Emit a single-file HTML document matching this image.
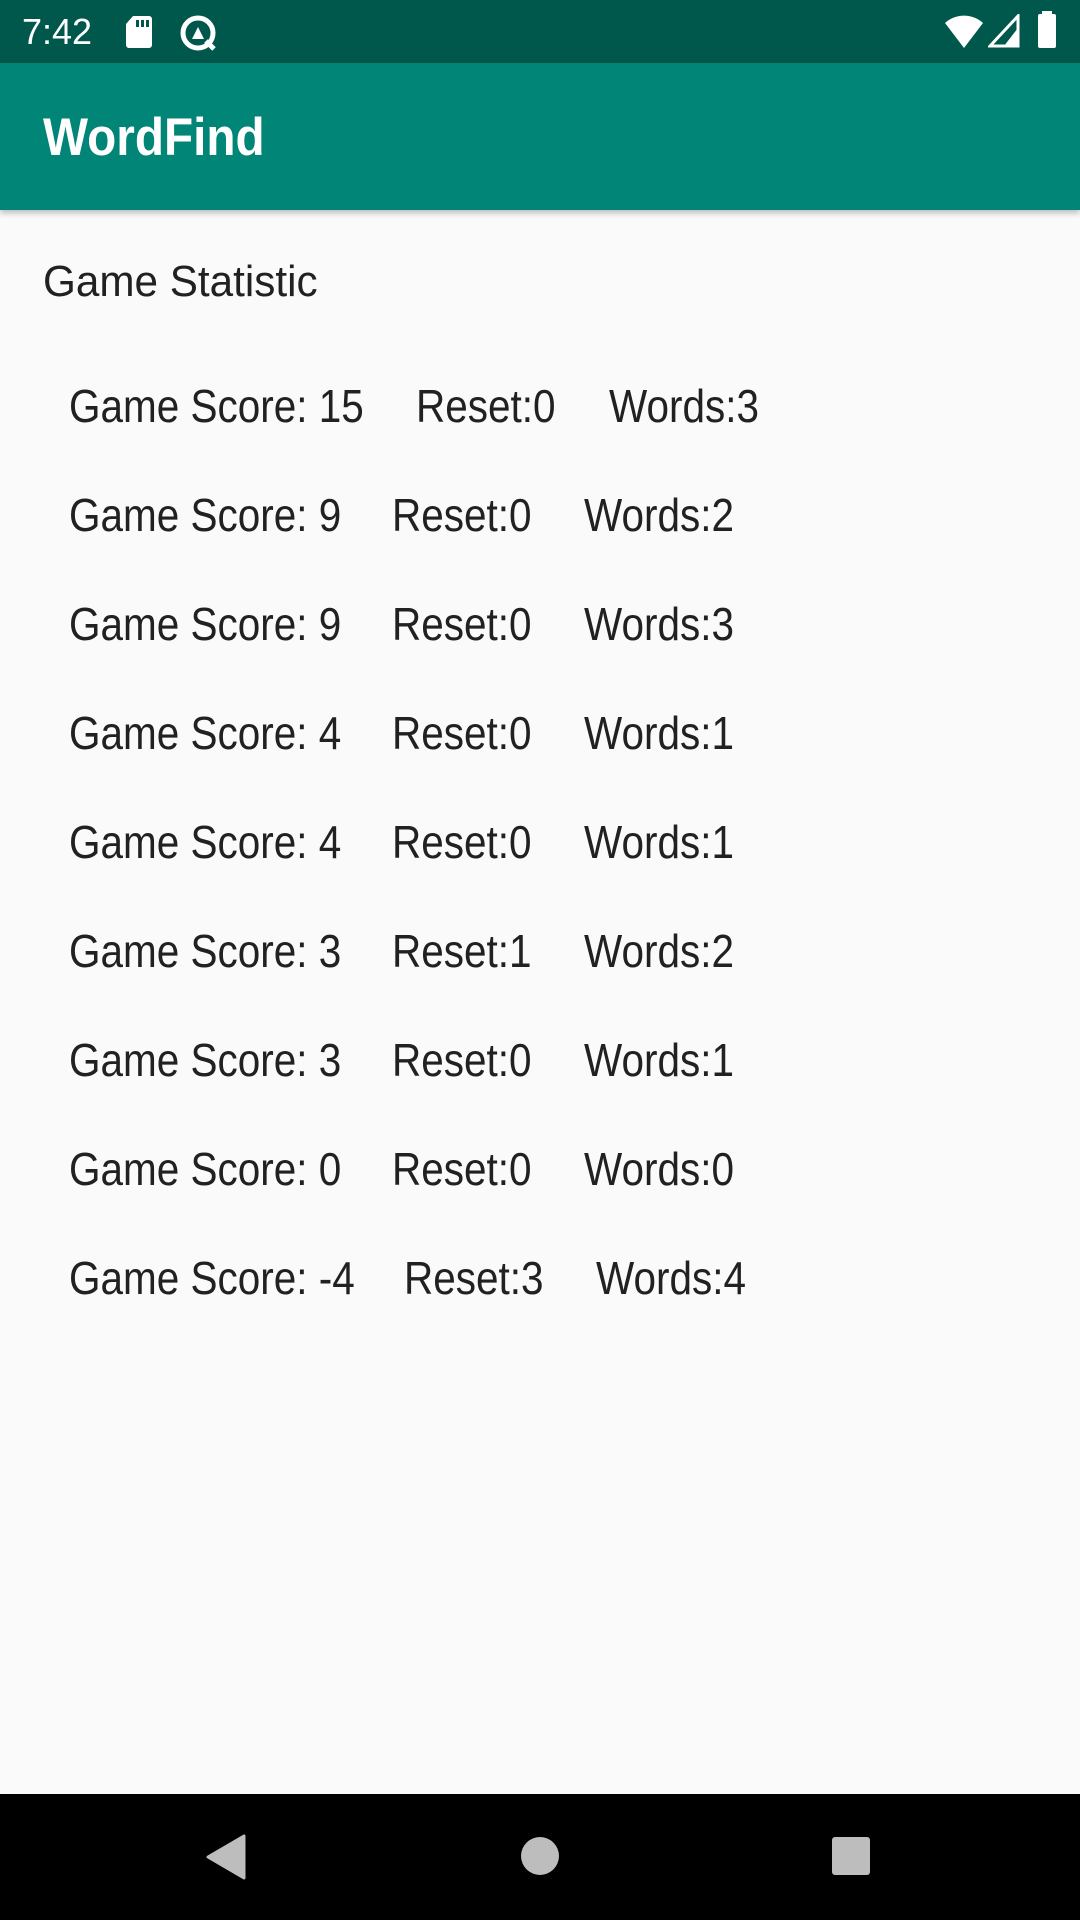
<!DOCTYPE html>
<html><head><meta charset="utf-8"><style>
*{margin:0;padding:0;box-sizing:border-box}
body{width:1080px;height:1920px;background:#FAFAFA;position:relative;overflow:hidden;font-family:"Liberation Sans",sans-serif;color:#212121}
.t{position:absolute;line-height:60px;height:60px;white-space:nowrap;transform-origin:left center;transform:scaleX(0.9)}
.r{font-size:46px;transform:scaleX(0.88)}
</style></head><body>
<div style="position:absolute;left:0;top:0;width:1080px;height:63px;background:#00574B"></div>
<div class="t" style="left:22px;top:2px;font-size:36px;color:#fff;transform:scaleX(1)">7:42</div>
<svg style="position:absolute;left:125px;top:16px" width="28" height="32" viewBox="0 0 28 32"><path d="M8 0H24a3 3 0 0 1 3 3V29a3 3 0 0 1-3 3H4a3 3 0 0 1-3-3V8z" fill="#fff"/><rect x="11" y="4" width="3" height="7" fill="#00574B"/><rect x="16" y="4" width="3" height="7" fill="#00574B"/><rect x="21" y="4" width="3" height="7" fill="#00574B"/></svg>
<svg style="position:absolute;left:178px;top:13px" width="40" height="40" viewBox="0 0 40 40"><circle cx="20" cy="20" r="15" fill="none" stroke="#fff" stroke-width="5"/><path d="M14 26L20 14L26 26Z" fill="#fff"/><path d="M28 28L36 36" stroke="#fff" stroke-width="5"/></svg>
<svg style="position:absolute;left:944px;top:14px" width="40" height="34" viewBox="0 0 40 34"><path d="M1 9A28 28 0 0 1 39 9L20 34Z" fill="#fff"/></svg>
<svg style="position:absolute;left:988px;top:14px" width="32" height="34" viewBox="0 0 32 34"><path d="M30 2V32H2Z" fill="none" stroke="#fff" stroke-width="3"/><path d="M30 14V32H16Z" fill="#fff"/></svg>
<div style="position:absolute;left:1038px;top:14px;width:18px;height:34px;background:#fff;border-radius:2px"></div>
<div style="position:absolute;left:1042px;top:11px;width:10px;height:4px;background:#fff"></div>
<div style="position:absolute;left:0;top:63px;width:1080px;height:147px;background:#008577;box-shadow:0 3px 6px rgba(0,0,0,0.25)"></div>
<div class="t" style="left:43px;top:108px;font-size:53px;font-weight:bold;color:#fff">WordFind</div>
<div class="t" style="left:43px;top:252px;font-size:44px;transform:scaleX(0.96)">Game Statistic</div>

<div class="t r" style="left:69px;top:376px">Game Score: 15</div><div class="t r" style="left:416px;top:376px">Reset:0</div><div class="t r" style="left:609px;top:376px">Words:3</div>
<div class="t r" style="left:69px;top:485px">Game Score: 9</div><div class="t r" style="left:392px;top:485px">Reset:0</div><div class="t r" style="left:584px;top:485px">Words:2</div>
<div class="t r" style="left:69px;top:594px">Game Score: 9</div><div class="t r" style="left:392px;top:594px">Reset:0</div><div class="t r" style="left:584px;top:594px">Words:3</div>
<div class="t r" style="left:69px;top:703px">Game Score: 4</div><div class="t r" style="left:392px;top:703px">Reset:0</div><div class="t r" style="left:584px;top:703px">Words:1</div>
<div class="t r" style="left:69px;top:812px">Game Score: 4</div><div class="t r" style="left:392px;top:812px">Reset:0</div><div class="t r" style="left:584px;top:812px">Words:1</div>
<div class="t r" style="left:69px;top:921px">Game Score: 3</div><div class="t r" style="left:392px;top:921px">Reset:1</div><div class="t r" style="left:584px;top:921px">Words:2</div>
<div class="t r" style="left:69px;top:1030px">Game Score: 3</div><div class="t r" style="left:392px;top:1030px">Reset:0</div><div class="t r" style="left:584px;top:1030px">Words:1</div>
<div class="t r" style="left:69px;top:1139px">Game Score: 0</div><div class="t r" style="left:392px;top:1139px">Reset:0</div><div class="t r" style="left:584px;top:1139px">Words:0</div>
<div class="t r" style="left:69px;top:1248px">Game Score: -4</div><div class="t r" style="left:404px;top:1248px">Reset:3</div><div class="t r" style="left:596px;top:1248px">Words:4</div>

<div style="position:absolute;left:0;top:1794px;width:1080px;height:126px;background:#000"></div>
<svg style="position:absolute;left:204px;top:1834px" width="44" height="46" viewBox="0 0 44 46"><path d="M40 2V44L4 23Z" fill="#bdbdbd" stroke="#bdbdbd" stroke-width="3" stroke-linejoin="round"/></svg>
<div style="position:absolute;left:521px;top:1837px;width:38px;height:38px;border-radius:50%;background:#bdbdbd"></div>
<div style="position:absolute;left:832px;top:1837px;width:38px;height:38px;border-radius:3px;background:#bdbdbd"></div>
</body></html>
